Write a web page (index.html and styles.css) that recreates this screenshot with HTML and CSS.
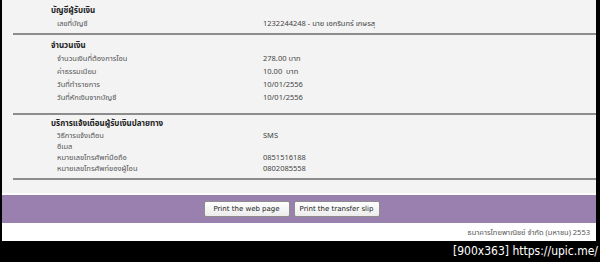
FILE: index.html
```html
<!DOCTYPE html>
<html lang="th">
<head>
    <meta charset="UTF-8">
    <title>ยืนยันการโอนเงิน</title>
    <link rel="stylesheet" href="styles.css">
</head>
<body>
    <div class="page">
        <div class="panel">
            <div class="section first">
                <div class="title">บัญชีผู้รับเงิน</div>
                <div class="row"><span class="label">เลขที่บัญชี</span><span class="value">1232244248 - นาย เอกรินทร์ เกษรสุ</span></div>
            </div>
            <div class="section amount">
                <div class="title">จำนวนเงิน</div>
                <div class="row"><span class="label">จำนวนเงินที่ต้องการโอน</span><span class="value">278.00 บาท</span></div>
                <div class="row"><span class="label">ค่าธรรมเนียม</span><span class="value">10.00&nbsp; บาท</span></div>
                <div class="row"><span class="label">วันที่ทำรายการ</span><span class="value">10/01/2556</span></div>
                <div class="row"><span class="label">วันที่หักเงินจากบัญชี</span><span class="value">10/01/2556</span></div>
            </div>
            <div class="section notify">
                <div class="title">บริการแจ้งเตือนผู้รับเงินปลายทาง</div>
                <div class="row"><span class="label">วิธีการแจ้งเตือน</span><span class="value">SMS</span></div>
                <div class="row"><span class="label">อีเมล</span><span class="value"></span></div>
                <div class="row"><span class="label">หมายเลขโทรศัพท์มือถือ</span><span class="value">0851516188</span></div>
                <div class="row"><span class="label">หมายเลขโทรศัพท์ของผู้โอน</span><span class="value">0802085558</span></div>
            </div>
        </div>
        <div class="actions">
            <button type="button">Print the web page</button>
            <button type="button">Print the transfer slip</button>
        </div>
        <div class="footer">ธนาคารไทยพาณิชย์ จำกัด (มหาชน) 2553</div>
    </div>
    <div class="watermark">[900x363] https://upic.me/</div>
</body>
</html>
```

FILE: styles.css
```css
body {
    margin: 0;
    padding: 0;
    background-color: #000;
    font-family: 'Noto Sans Thai', 'Tahoma', 'DejaVu Sans', sans-serif;
    color: #444;
}

.page {
    width: 594px;
    margin-left: 2px;
    background-color: #fff;
}

.panel {
    background-color: #f3f3f3;
    padding-bottom: 13px;
    margin-bottom: 2px;
}

.section {
    margin-left: 11px;
    padding-left: 38px;
    border-bottom: 2px solid #8c8c8c;
}

.section.first {
    padding-top: 5px;
    padding-bottom: 4px;
}

.section.first .row {
    margin-top: 1px;
}

.section.amount {
    padding-top: 5px;
    padding-bottom: 9px;
}

.section.amount .row {
    height: 13px;
    line-height: 13px;
}

.section.notify {
    padding-top: 3px;
    padding-bottom: 4px;
}

.title {
    font-size: 8px;
    font-weight: bold;
    line-height: 12px;
    color: #222;
}

.row {
    display: flex;
    padding-left: 6px;
    font-size: 7.5px;
    line-height: 11px;
    height: 11px;
}

.label {
    flex: none;
    width: 206px;
    color: #555;
}

.value {
    color: #444;
}

.actions {
    background-color: #9a80ae;
    height: 28px;
    display: flex;
    justify-content: center;
    align-items: center;
    gap: 4px;
    padding-right: 15px;
}

.actions button {
    width: 86px;
    height: 16px;
    padding: 0;
    font-family: 'DejaVu Sans', sans-serif;
    font-size: 7px;
    color: #222;
    background: linear-gradient(#ffffff, #ececec);
    border: 1px solid #8d8d8d;
    border-radius: 2px;
}

.footer {
    height: 18px;
    line-height: 19px;
    text-align: right;
    padding-right: 6px;
    font-size: 7.5px;
    color: #555;
}

.watermark {
    height: 20px;
    line-height: 20px;
    text-align: right;
    padding-right: 2px;
    font-family: 'DejaVu Sans Condensed', 'DejaVu Sans', sans-serif;
    font-size: 12px;
    color: #fff;
}
```
